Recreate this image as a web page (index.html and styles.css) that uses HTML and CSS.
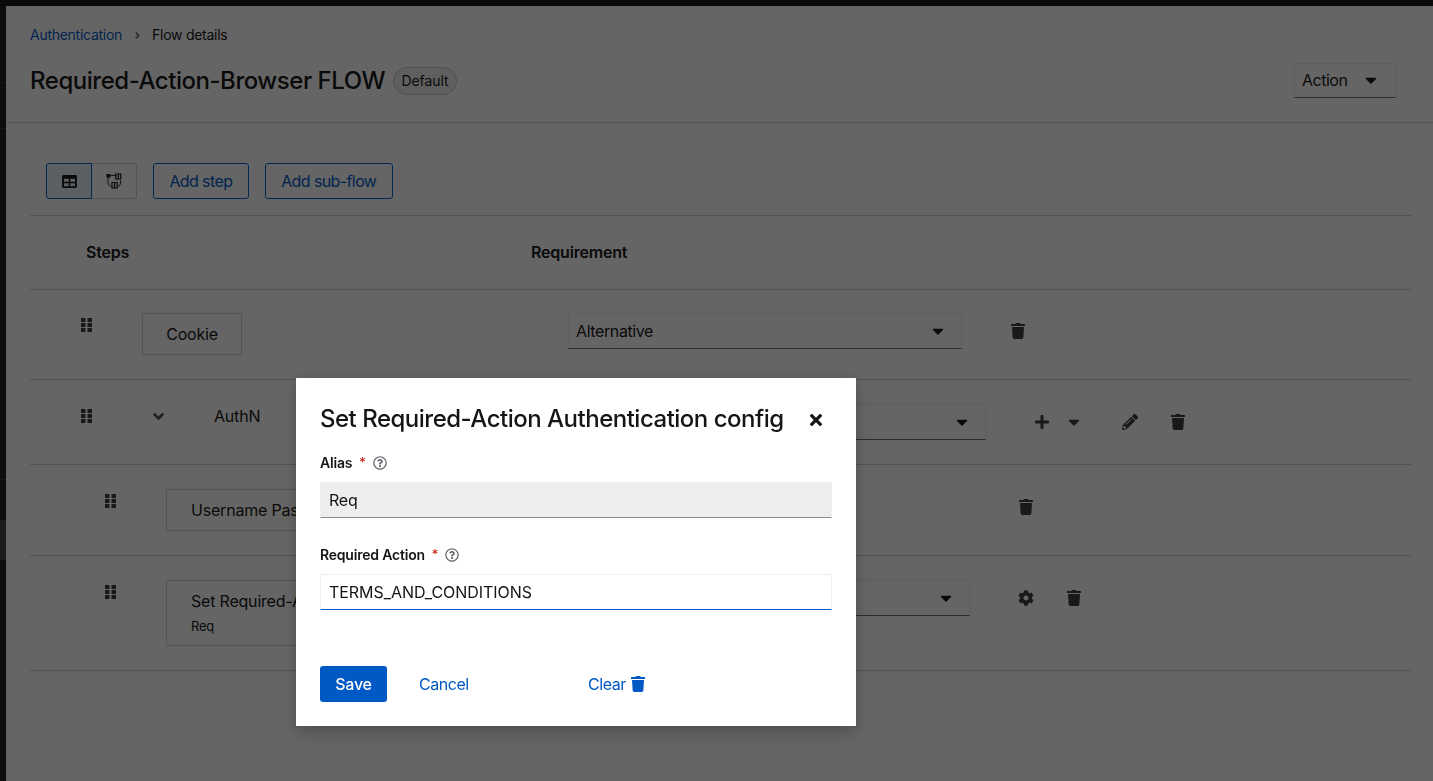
FILE: index.html
```html
<!DOCTYPE html>
<html lang="en">
<head>
<meta charset="utf-8">
<title>Flow details</title>
<link rel="stylesheet" href="styles.css">
</head>
<body>
<svg class="sprite" xmlns="http://www.w3.org/2000/svg">
  <defs>
    <symbol id="i-trash" viewBox="0 0 448 512"><path d="M432 32H312l-9.4-18.7A24 24 0 0 0 281.1 0H166.8a23.72 23.72 0 0 0-21.4 13.3L136 32H16A16 16 0 0 0 0 48v32a16 16 0 0 0 16 16h416a16 16 0 0 0 16-16V48a16 16 0 0 0-16-16zM53.2 467a48 48 0 0 0 47.9 45h245.8a48 48 0 0 0 47.9-45L416 128H32z"/></symbol>
    <symbol id="i-caret" viewBox="0 0 320 512"><path d="M31.3 192h257.3c17.8 0 26.7 21.5 14.1 34.1L174.1 354.8c-7.8 7.8-20.5 7.8-28.3 0L17.2 226.1C4.6 213.5 13.5 192 31.3 192z"/></symbol>
    <symbol id="i-grip" viewBox="0 0 11 14"><path d="M0 0h4.5v4H0zM6.5 0H11v4H6.500zM0 5h4.500v4H0zM6.500 5H11v4H6.500zM0 10h4.500v4H0zM6.500 10H11v4H6.500z"/></symbol>
    <symbol id="i-question" viewBox="0 0 512 512"><path d="M256 8C119 8 8 119.043 8 256c0 136.983 111 248 248 248s248-111.017 248-248C504 119.083 393 8 256 8zm0 448c-110.532 0-200-89.431-200-200 0-110.5 89.472-200 200-200 110.491 0 200 89.471 200 200 0 110.53-89.431 200-200 200zm107.244-255.2c0 67.052-72.421 68.084-72.421 92.863V300c0 6.627-5.373 12-12 12h-45.647c-6.627 0-12-5.373-12-12v-8.659c0-35.745 27.1-50.034 47.579-61.516 17.561-9.845 28.324-16.541 28.324-29.579 0-17.246-21.999-28.693-39.784-28.693-23.189 0-33.894 10.977-48.942 29.969-4.057 5.12-11.46 6.071-16.666 2.124l-27.824-21.098c-5.107-3.872-6.251-11.066-2.644-16.363C184.846 131.491 214.94 112 261.794 112c49.071 0 101.45 38.304 101.45 88.8zM298 368c0 23.159-18.841 42-42 42s-42-18.841-42-42 18.841-42 42-42 42 18.841 42 42z"/></symbol>
  </defs>
</svg>

<div class="app">
  <div class="topbar"></div>
  <div class="shell">
    <aside class="sidebar">
      <div class="side-group side-a"></div>
      <div class="side-group side-b"></div>
      <div class="side-group side-c"></div>
      <div class="side-item"></div>
    </aside>
    <main class="main">
      <header class="page-header">
        <nav class="breadcrumb">
          <a class="crumb-link">Authentication</a>
          <svg class="crumb-sep" viewBox="0 0 256 512"><path d="M224.300 273l-136 136c-9.400 9.400-24.600 9.400-33.900 0l-22.600-22.600c-9.400-9.400-9.400-24.600 0-33.900l96.400-96.400-96.400-96.400c-9.400-9.400-9.400-24.600 0-33.900L54.300 103c9.400-9.400 24.600-9.400 33.900 0l136 136c9.500 9.400 9.500 24.600.1 34z"/></svg>
          <span>Flow details</span>
        </nav>
        <div class="title-row">
          <h1 class="page-title">Required-Action-Browser FLOW</h1>
          <span class="chip">Default</span>
          <button class="action-select">Action <svg class="caret"><use href="#i-caret"/></svg></button>
        </div>
      </header>

      <section class="flow">
        <div class="toolbar">
          <div class="toggle">
            <button class="toggle-btn selected">
              <svg class="toggle-icon" viewBox="0 0 16 14"><path fill-rule="evenodd" d="M1.500 0h13A1.500 1.500 0 0 1 16 1.500v11a1.500 1.500 0 0 1-1.500 1.500h-13A1.500 1.500 0 0 1 0 12.500v-11A1.500 1.500 0 0 1 1.500 0zM2 4v3.200h5.200V4zm6.800 0v3.200H14V4zM2 8.800V12h5.200V8.800zm6.800 0V12H14V8.800z"/></svg>
            </button>
            <button class="toggle-btn">
              <svg class="toggle-icon topo" viewBox="0 0 16 16">
                <path class="topo-fill" d="M.5 1h4v3.500h-4z"/>
                <path class="topo-box" d="M9.800 1h5v5h-5zM12.300 1v5M6 9.500h5.200V15H6zM8.600 9.500V15"/>
                <path class="topo-line" d="M4.500 2.500h5.300M2 4.500v5c0 2 1 3.200 3.400 4.300M14.500 7.500v2.500c0 1.500-.8 2.500-2.600 3.500"/>
              </svg>
            </button>
          </div>
          <button class="btn-outline">Add step</button>
          <button class="btn-outline">Add sub-flow</button>
        </div>

        <div class="table-head">
          <div class="head-steps">Steps</div>
          <div class="head-req">Requirement</div>
        </div>

        <div class="row row-cookie">
          <svg class="grip"><use href="#i-grip"/></svg>
          <div class="step-box cookie-box">Cookie</div>
          <div class="select select-cookie"><span>Alternative</span><svg class="caret"><use href="#i-caret"/></svg></div>
          <div class="actions actions-cookie">
            <svg class="icon trash"><use href="#i-trash"/></svg>
          </div>
        </div>

        <div class="row row-authn">
          <svg class="grip"><use href="#i-grip"/></svg>
          <svg class="chevron" viewBox="0 0 320 512"><path d="M143 352.300L7 216.300c-9.400-9.400-9.400-24.600 0-33.900l22.600-22.600c9.400-9.400 24.600-9.400 33.900 0l96.400 96.400 96.400-96.400c9.400-9.400 24.600-9.400 33.900 0l22.600 22.600c9.400 9.400 9.400 24.600 0 33.900l-136 136c-9.200 9.400-24.400 9.400-33.800 0z"/></svg>
          <div class="flow-name">AuthN</div>
          <div class="select select-authn"><span></span><svg class="caret"><use href="#i-caret"/></svg></div>
          <div class="actions actions-authn">
            <svg class="icon plus" viewBox="0 0 448 512"><path d="M416 208H272V64c0-17.670-14.330-32-32-32h-32c-17.670 0-32 14.330-32 32v144H32c-17.670 0-32 14.330-32 32v32c0 17.670 14.330 32 32 32h144v144c0 17.670 14.330 32 32 32h32c17.670 0 32-14.330 32-32V304h144c17.670 0 32-14.330 32-32v-32c0-17.670-14.330-32-32-32z"/></svg>
            <svg class="caret caret-muted"><use href="#i-caret"/></svg>
            <svg class="icon pencil" viewBox="0 0 512 512"><path d="M497.900 142.100l-46.100 46.100c-4.700 4.700-12.300 4.700-17 0l-111-111c-4.700-4.700-4.700-12.300 0-17l46.100-46.100c18.700-18.700 49.100-18.700 67.900 0l60.100 60.100c18.800 18.700 18.800 49.100 0 67.900zM284.200 99.800L21.600 362.400.4 483.900c-2.900 16.400 11.400 30.600 27.800 27.800l121.500-21.300 262.600-262.600c4.700-4.700 4.700-12.300 0-17l-111-111c-4.800-4.700-12.400-4.700-17.100 0zM124.100 339.900c-5.500-5.500-5.500-14.300 0-19.800l154-154c5.500-5.500 14.300-5.500 19.800 0s5.500 14.300 0 19.800l-154 154c-5.500 5.500-14.300 5.500-19.800 0zM88 424h48v36.300l-64.500 11.300-31.100-31.100L51.700 376H88v48z"/></svg>
            <svg class="icon trash"><use href="#i-trash"/></svg>
          </div>
        </div>

        <div class="row row-user">
          <svg class="grip"><use href="#i-grip"/></svg>
          <div class="step-box wide-box"><div class="clip">Username Password Form</div></div>
          <div class="actions actions-user">
            <svg class="icon trash"><use href="#i-trash"/></svg>
          </div>
        </div>

        <div class="row row-set">
          <svg class="grip"><use href="#i-grip"/></svg>
          <div class="step-box wide-box set-box">
            <div class="clip">Set Required-Action</div>
            <div class="step-sub">Req</div>
          </div>
          <div class="select select-set"><span></span><svg class="caret"><use href="#i-caret"/></svg></div>
          <div class="actions actions-set">
            <svg class="icon gear" viewBox="0 0 512 512"><path d="M487.400 315.700l-42.600-24.600c4.300-23.200 4.300-47 0-70.200l42.600-24.600c4.900-2.800 7.100-8.600 5.500-14-11.100-35.600-30-67.800-54.700-94.600-3.800-4.100-10-5.100-14.800-2.300L380.800 110c-17.900-15.400-38.500-27.300-60.800-35.100V25.800c0-5.600-3.900-10.500-9.400-11.700-36.700-8.200-74.300-7.800-109.200 0-5.500 1.200-9.400 6.100-9.400 11.700V75c-22.200 7.900-42.800 19.800-60.800 35.100L88.700 85.500c-4.900-2.800-11-1.900-14.800 2.300-24.700 26.700-43.600 58.900-54.700 94.600-1.700 5.400.6 11.200 5.500 14L67.300 221c-4.300 23.200-4.300 47 0 70.200l-42.600 24.600c-4.900 2.800-7.100 8.600-5.500 14 11.100 35.600 30 67.800 54.700 94.600 3.800 4.100 10 5.100 14.800 2.300l42.600-24.600c17.900 15.400 38.500 27.300 60.800 35.100v49.200c0 5.600 3.900 10.500 9.400 11.700 36.700 8.200 74.300 7.800 109.200 0 5.500-1.200 9.400-6.100 9.400-11.700v-49.200c22.200-7.900 42.800-19.800 60.800-35.100l42.600 24.600c4.900 2.800 11 1.900 14.800-2.300 24.700-26.700 43.600-58.900 54.700-94.600 1.500-5.500-.7-11.300-5.600-14.100zM256 336c-44.100 0-80-35.900-80-80s35.900-80 80-80 80 35.900 80 80-35.900 80-80 80z"/></svg>
            <svg class="icon trash"><use href="#i-trash"/></svg>
          </div>
        </div>
      </section>
    </main>
  </div>
</div>

<div class="backdrop">
  <div class="modal" role="dialog">
    <div class="modal-head">
      <h2 class="modal-title">Set Required-Action Authentication config</h2>
      <svg class="close" viewBox="0 0 352 512"><path d="M242.720 256l100.070-100.070c12.280-12.280 12.280-32.190 0-44.480l-22.240-22.240c-12.280-12.280-32.190-12.280-44.480 0L176 189.280 75.930 89.210c-12.280-12.280-32.190-12.280-44.480 0L9.210 111.450c-12.280 12.280-12.280 32.190 0 44.480L109.280 256 9.210 356.070c-12.280 12.280-12.280 32.190 0 44.480l22.240 22.240c12.280 12.280 32.200 12.280 44.480 0L176 322.720l100.070 100.070c12.280 12.280 32.200 12.280 44.480 0l22.240-22.240c12.280-12.280 12.280-32.190 0-44.480L242.720 256z"/></svg>
    </div>
    <div class="field field-alias">
      <div class="label"><b>Alias</b><i class="req">*</i><svg class="help"><use href="#i-question"/></svg></div>
      <div class="input input-readonly">Req</div>
    </div>
    <div class="field field-action">
      <div class="label"><b>Required Action</b><i class="req">*</i><svg class="help"><use href="#i-question"/></svg></div>
      <div class="input input-focus">TERMS_AND_CONDITIONS</div>
    </div>
    <div class="modal-actions">
      <button class="btn-save">Save</button>
      <button class="btn-link btn-cancel">Cancel</button>
      <button class="btn-link btn-clear">Clear <svg class="clear-trash"><use href="#i-trash"/></svg></button>
    </div>
  </div>
</div>
</body>
</html>
```

FILE: styles.css
```css
* { box-sizing: border-box; }
html, body { margin: 0; height: 100%; overflow: hidden; }
body {
  font-family: Inter, "Open Sans", "Liberation Sans", sans-serif;
  font-size: 16px;
  letter-spacing: -0.2px;
  color: #151515;
  background: #fff;
}
.sprite { width: 0; height: 0; display: block; overflow: hidden; }
button { font: inherit; letter-spacing: inherit; background: none; border: 0; padding: 0; margin: 0; color: inherit; }

.app { height: 781px; display: flex; flex-direction: column; }
.topbar { height: 6px; background: #151515; flex: none; }
.shell { flex: 1; display: flex; min-height: 0; }
.sidebar { width: 6px; background: #1b1d21; flex: none; display: flex; flex-direction: column; }
.side-group { border-bottom: 1px solid #2f3235; flex: none; }
.side-a { height: 77px; }
.side-b { height: 46px; }
.side-c { height: 351px; }
.side-item { height: 40px; margin-top: 40px; background: #44474b; flex: none; }
.main { flex: 1; min-width: 0; background: #fff; }

.page-header { height: 117px; border-bottom: 1px solid #d2d2d2; padding: 20px 24px 0; }
.breadcrumb { display: flex; align-items: center; font-size: 14px; line-height: 18px; letter-spacing: -0.27px; }
.crumb-link { color: #0059c5; }
.crumb-sep { width: 7px; height: 11px; margin: 0 11px 0 12px; fill: #6a6e73; }
.title-row { display: flex; align-items: center; margin-top: 19px; height: 36px; }
.page-title { font-size: 24px; font-weight: 500; margin: 0; line-height: 36px; letter-spacing: -0.47px; white-space: nowrap; }
.chip {
  margin-left: 8px; height: 28px; padding: 0 7.500px; border: 1px solid #c8c8c8; border-radius: 14px;
  font-size: 14px; letter-spacing: -0.1px; line-height: 26px; background: #f0f0f0; color: #151515;
}
.action-select {
  margin: -2px 13px 0 auto; width: 102px; height: 35px; display: flex; align-items: center;
  padding-left: 7px; gap: 18px; font-size: 16px; letter-spacing: -0.5px;
  border: 1px solid #f0f0f0; border-bottom-color: #6a6e73;
}
.caret { width: 12px; height: 18px; fill: #151515; flex: none; }

.flow { padding: 40px 21px 0 24px; }
.toolbar { display: flex; gap: 16px; padding: 0 0 16px 16px; border-bottom: 1px solid #d2d2d2; height: 53px; }
.toggle { display: flex; height: 36px; }
.toggle-btn {
  width: 45px; height: 36px; display: flex; align-items: center; justify-content: center;
  border: 1px solid #d2d2d2; border-left: 0; border-radius: 0 3px 3px 0;
}
.toggle-btn.selected { width: 46px; border: 1px solid #06c; background: #e7f1fa; border-radius: 3px 0 0 3px; }
.toggle-icon { width: 15px; height: 13px; fill: #151515; }
.toggle-icon.topo { width: 16px; height: 16px; }
.topo-fill { fill: #151515; }
.topo-box { fill: none; stroke: #151515; stroke-width: 1.200; }
.topo-line { fill: none; stroke: #151515; stroke-width: .9; }
.btn-outline { height: 36px; padding: 0 15.400px; border: 1px solid #06c; border-radius: 3px; color: #0059c5; font-size: 16px; letter-spacing: -0.6px; }

.table-head { height: 74px; border-bottom: 1px solid #d2d2d2; padding-bottom: 2px; display: flex; align-items: center; font-weight: 600; font-size: 16px; }
.head-steps { margin-left: 56px; width: 445px; }

.row { display: flex; border-bottom: 1px solid #d2d2d2; }
.grip { width: 11px; height: 14px; fill: #3d3d3d; flex: none; }
.row-cookie { height: 90px; padding: 28px 0 0 51px; }
.row-authn { height: 85px; padding: 29px 0 0 51px; }
.row-user { height: 91px; padding: 29px 0 0 75px; }
.row-set { height: 115px; padding: 29px 0 0 75px; }

.step-box { border: 1px solid #d2d2d2; display: flex; flex-direction: column; justify-content: center; white-space: nowrap; flex: none; }
.cookie-box { width: 100px; height: 42px; margin: -5px 0 0 50px; align-items: center; }
.wide-box { width: 380px; height: 42px; margin: -5px 0 0 50px; padding-left: 24px; }
.set-box { height: 66px; justify-content: flex-start; padding-top: 10px; }
.clip { width: 105px; overflow: hidden; }
.step-sub { font-size: 13px; margin-top: 7px; }

.select { height: 36px; border: 1px solid #f0f0f0; border-bottom-color: #6a6e73; display: flex; align-items: center; justify-content: space-between; padding: 0 17px 0 7px; flex: none; width: 394px; }
.select-cookie { margin: -5px 0 0 326px; letter-spacing: -0.4px; }
.select-authn { margin: -5px 0 0 328px; }
.select-set { margin: -5px 0 0 30px; }
.flow-name { width: 50px; margin: -1px 0 0 50px; flex: none; line-height: 16px; }
.chevron { width: 11px; height: 17px; fill: #4a4a4a; margin: -1.500px 0 0 61px; flex: none; }

.actions { display: flex; align-items: flex-start; flex: none; }
.icon { flex: none; width: 14px; height: 16px; fill: #3d3d3d; }
.actions-cookie { margin: 5px 0 0 49px; }
.actions-authn { margin: 5px 0 0 49px; }
.caret-muted { fill: #3d3d3d; margin: -1px 0 0 19px; }
.actions-authn .pencil { width: 16px; margin-left: 42px; }
.actions-authn .trash { margin-left: 33px; }
.actions-user { margin: 5px 0 0 473px; }
.actions-set { margin: 5px 0 0 48px; }
.actions-set .gear { width: 16px; }
.actions-set .trash { margin-left: 33px; }

.backdrop { position: fixed; inset: 0; background: rgba(3, 3, 3, .61); }
.modal {
  position: absolute; left: 296px; top: 378px; width: 560px; height: 348px; background: #fff;
  padding: 24px; box-shadow: 0 8px 16px rgba(3, 3, 3, .16), 0 0 8px rgba(3, 3, 3, .1);
}
.modal-head { display: flex; align-items: center; height: 32px; }
.modal-title { margin: 2px 0 0; font-size: 24px; font-weight: 500; line-height: 32px; letter-spacing: -0.5px; white-space: nowrap; }
.close { width: 12px; height: 18px; fill: #151515; margin: 4px 10px 0 auto; }
.field { display: flex; flex-direction: column; }
.field-alias { margin-top: 19px; }
.field-action { margin-top: 27px; }
.label { display: flex; align-items: center; height: 20px; padding-bottom: 2px; font-size: 14px; }
.label b { font-weight: 600; }
.req { color: #c9190b; font-style: normal; margin-left: 7px; font-size: 13px; }
.help { width: 14px; height: 14px; fill: #6a6e73; margin: 2px 0 0 7px; }
.input { height: 36px; margin-top: 9px; padding: 0 8px; display: flex; align-items: center; font-size: 16px; border: 1px solid #f0f0f0; border-bottom-color: #8a8d90; }
.input-readonly { background: #eee; }
.input-focus { border-bottom-color: #0059c5; letter-spacing: -0.05px; }
.modal-actions { display: flex; align-items: center; margin-top: 56px; height: 36px; }
.btn-save { width: 67px; height: 36px; background: #0059c5; color: #fff; border-radius: 3px; font-weight: 500; }
.btn-link { color: #0059c5; letter-spacing: -0.45px; }
.btn-cancel { margin-left: 32px; width: 50px; text-align: left; }
.btn-clear { margin-left: 119px; display: flex; align-items: center; gap: 5px; }
.clear-trash { width: 14px; height: 16px; fill: #0059c5; }
```
